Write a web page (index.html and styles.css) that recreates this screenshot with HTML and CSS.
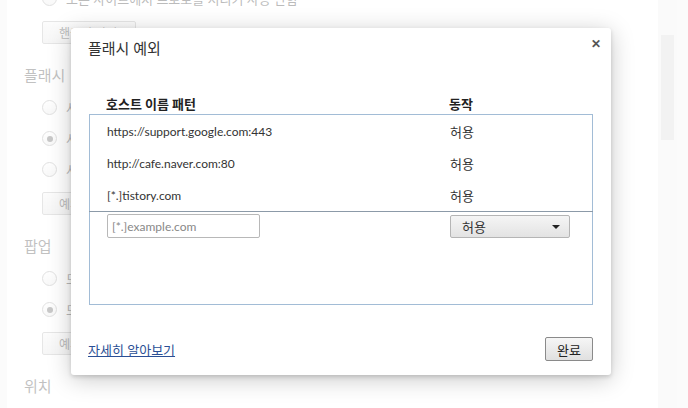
FILE: index.html
```html
<!DOCTYPE html>
<html lang="ko">
<head>
    <meta charset="UTF-8">
    <title>설정 - 플래시 예외</title>
    <link rel="stylesheet" href="styles.css">
</head>
<body>
    <div class="frame">
        <div class="page">
            <div class="settings">
                <div class="radio-row"><span class="radio"></span>모든 사이트에서 프로토콜 처리기 사용 안함</div>
                <button class="small-btn wide">핸들러 관리...</button>

                <h3 class="section-title">플래시</h3>
                <div class="radio-row"><span class="radio"></span>사이트</div>
                <div class="radio-row"><span class="radio checked"></span>사이트</div>
                <div class="radio-row"><span class="radio"></span>사이트</div>
                <button class="small-btn">예외...</button>

                <h3 class="section-title">팝업</h3>
                <div class="radio-row"><span class="radio"></span>모든</div>
                <div class="radio-row"><span class="radio checked"></span>모든</div>
                <button class="small-btn">예외...</button>

                <h3 class="section-title">위치</h3>
            </div>
        </div>
        <div class="scrollbar"><div class="thumb"></div></div>
    </div>

    <div class="overlay"></div>

    <div class="dialog">
        <div class="dialog-title">
            <span>플래시 예외</span>
            <span class="close">&#x2715;</span>
        </div>

        <div class="dialog-body">
            <div class="list-head">
                <span class="col-pattern">호스트 이름 패턴</span>
                <span class="col-action">동작</span>
            </div>
            <div class="list">
                <div class="list-row">
                    <span class="col-pattern">https://support.google.com:443</span>
                    <span class="col-action">허용</span>
                </div>
                <div class="list-row">
                    <span class="col-pattern">http://cafe.naver.com:80</span>
                    <span class="col-action">허용</span>
                </div>
                <div class="list-row">
                    <span class="col-pattern">[*.]tistory.com</span>
                    <span class="col-action">허용</span>
                </div>
                <div class="list-row new-row">
                    <span class="col-pattern"><input class="pattern-input" type="text" placeholder="[*.]example.com"></span>
                    <span class="col-action">
                        <span class="select">허용<span class="arrow"></span></span>
                    </span>
                </div>
            </div>
        </div>

        <div class="dialog-footer">
            <a href="#" class="learn-more">자세히 알아보기</a>
            <button class="done-btn">완료</button>
        </div>
    </div>
</body>
</html>
```

FILE: styles.css
```css
body {
    margin: 0;
    width: 688px;
    height: 408px;
    overflow: hidden;
    font-family: Lato, "Noto Sans CJK KR", sans-serif;
    font-size: 13px;
    color: #333;
    background-color: #f4f4f4;
}

.frame {
    display: flex;
    height: 408px;
}

.page {
    width: 651px;
    margin-left: 7px;
    background-color: #fff;
    overflow: hidden;
}

.settings {
    margin-top: -17px;
    padding-left: 17px;
}

.radio-row {
    display: flex;
    align-items: center;
    height: 31px;
    padding-left: 18px;
    color: #444;
}

.radio {
    width: 13px;
    height: 13px;
    border: 1px solid #aaa;
    border-radius: 50%;
    margin-right: 9px;
    background: linear-gradient(#fdfdfd, #ececec);
    display: flex;
    align-items: center;
    justify-content: center;
}

.radio.checked::after {
    content: "";
    width: 6px;
    height: 6px;
    border-radius: 50%;
    background-color: #666;
}

.small-btn {
    display: block;
    margin: 7px 0 0 18px;
    width: 94px;
    height: 23px;
    border: 1px solid #bbb;
    border-radius: 2px;
    background: linear-gradient(#f6f6f6, #e6e6e6);
    font-family: inherit;
    font-size: 12px;
    color: #444;
    text-align: left;
    padding-left: 16px;
}

.section-title {
    margin: 21px 0 7px 0;
    height: 20px;
    line-height: 20px;
    font-size: 15px;
    font-weight: normal;
    color: #555;
}

.scrollbar {
    width: 19px;
    background-color: #f0f0f0;
    padding: 35px 3px 0 3px;
    box-sizing: border-box;
}

.thumb {
    height: 105px;
    background-color: #dcdcdc;
}

.overlay {
    position: absolute;
    top: 0;
    left: 0;
    width: 688px;
    height: 408px;
    background-color: rgba(255, 255, 255, 0.64);
}

.dialog {
    position: absolute;
    left: 71px;
    top: 28px;
    width: 540px;
    height: 347px;
    background-color: #fff;
    border-radius: 3px;
    box-shadow: 0 4px 23px rgba(0, 0, 0, 0.22), 0 2px 4px rgba(0, 0, 0, 0.15);
    display: flex;
    flex-direction: column;
}

.dialog-title {
    display: flex;
    justify-content: space-between;
    padding: 10px 10px 0 17px;
    font-size: 15px;
    color: #333;
    height: 30px;
    line-height: 20px;
}

.close {
    font-size: 12px;
    font-weight: bold;
    color: #555;
    line-height: 10px;
    padding-top: 1px;
}

.dialog-body {
    padding: 26px 18px 0 18px;
}

.list-head {
    display: flex;
    padding-left: 17px;
    height: 20px;
    line-height: 20px;
    font-weight: bold;
    color: #222;
}

.col-pattern {
    width: 343px;
}

.list {
    height: 189px;
    border: 1px solid #a2bcd6;
}

.list-row {
    display: flex;
    align-items: center;
    height: 32px;
    padding-left: 17px;
    color: #333;
}

.list-row .col-pattern {
    font-size: 12px;
}

.new-row {
    height: 28px;
    border-top: 1px solid #8c9aa8;
    margin-left: -1px;
    margin-right: -1px;
    padding-left: 18px;
    align-items: flex-start;
    padding-top: 2px;
}

.pattern-input {
    width: 153px;
    height: 24px;
    box-sizing: border-box;
    border: 1px solid #b8b8b8;
    border-radius: 2px;
    font-family: inherit;
    font-size: 12px;
    padding: 0 4px;
}

.pattern-input::placeholder {
    color: #888;
}

.select {
    display: flex;
    align-items: center;
    justify-content: space-between;
    width: 120px;
    height: 23px;
    box-sizing: border-box;
    margin-top: 1px;
    padding: 0 9px 0 11px;
    border: 1px solid #b5b5b5;
    border-radius: 2px;
    background: linear-gradient(#f5f5f5, #e3e3e3);
    color: #333;
}

.arrow {
    width: 0;
    height: 0;
    border-left: 4px solid transparent;
    border-right: 4px solid transparent;
    border-top: 4px solid #222;
}

.dialog-footer {
    margin-top: auto;
    display: flex;
    justify-content: space-between;
    align-items: center;
    padding: 0 18px 14px 17px;
}

.learn-more {
    color: #2b4f95;
    text-decoration: underline;
}

.done-btn {
    width: 48px;
    height: 24px;
    border: 1px solid #8a8a8a;
    border-radius: 2px;
    background: linear-gradient(#f6f6f6, #e0e0e0);
    font-family: inherit;
    font-size: 13px;
    color: #222;
    padding: 0;
}
```
